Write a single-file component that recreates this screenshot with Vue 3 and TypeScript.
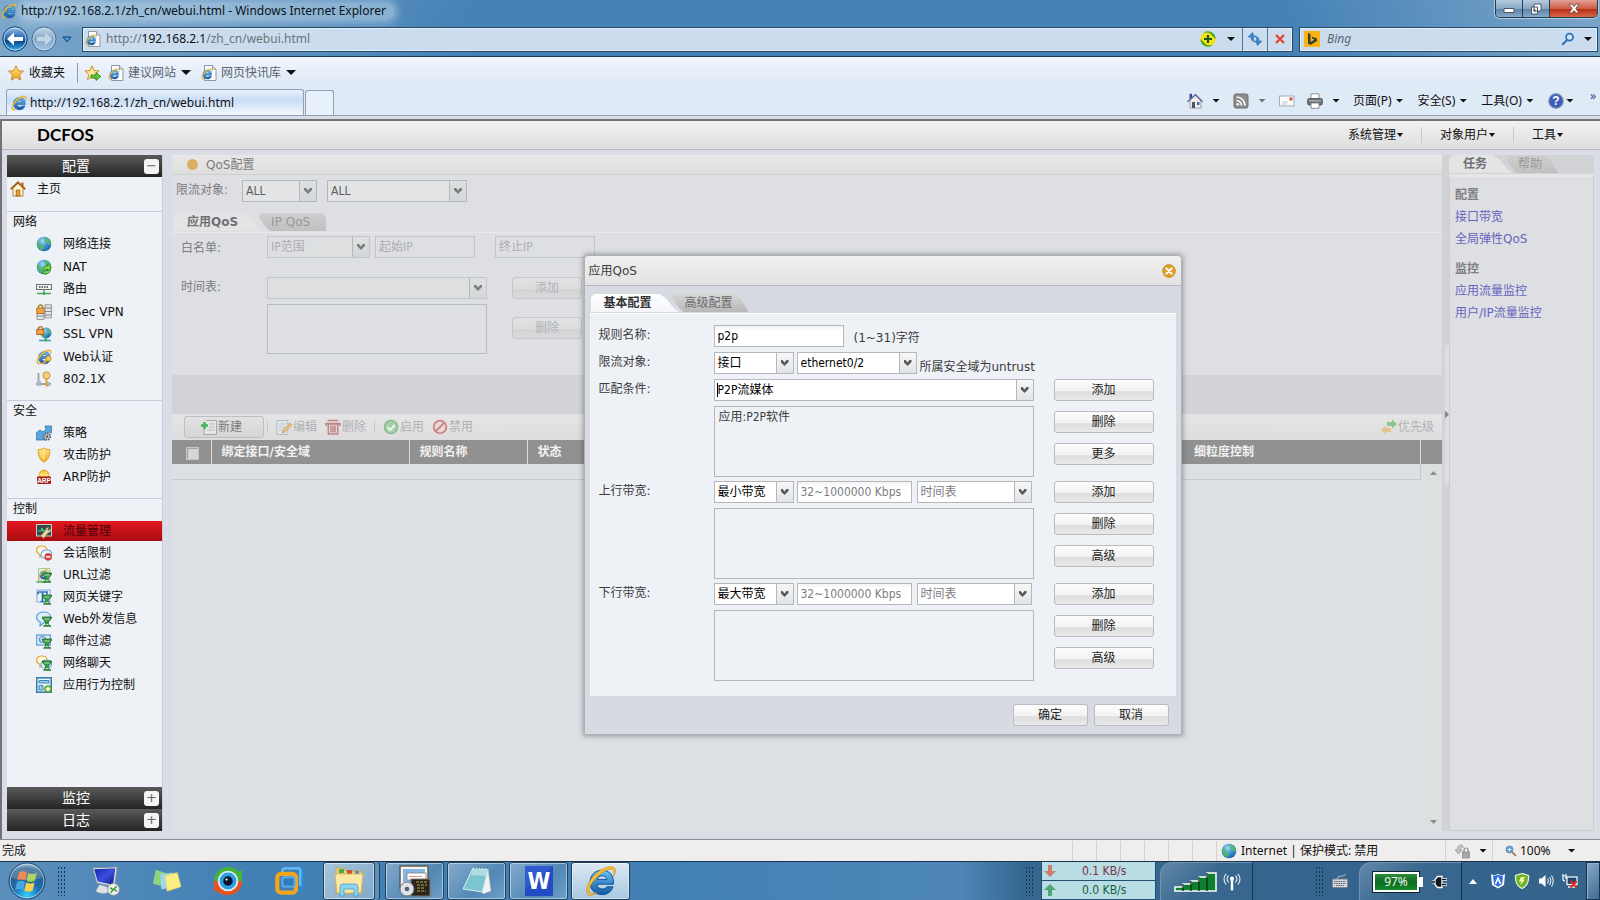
<script setup lang="ts">
import { h, ref } from 'vue'

interface IconProps { n: string; s?: number }
const Ico = (p: IconProps) =>
  h('svg', { width: p.s ?? 16, height: p.s ?? 16, 'aria-hidden': 'true' }, [h('use', { href: '#i-' + p.n })])
Ico.props = ['n', 's']

interface NavItem { icon: string; label: string; tall?: boolean }
interface NavGroup { title: string; items: NavItem[] }

const groups: NavGroup[] = [
  { title: '网络', items: [
    { icon: 'globe', label: '网络连接' },
    { icon: 'nat', label: 'NAT', tall: true },
    { icon: 'route', label: '路由' },
    { icon: 'ipsec', label: 'IPSec VPN', tall: true },
    { icon: 'ssl', label: 'SSL VPN' },
    { icon: 'webauth', label: 'Web认证', tall: true },
    { icon: 'dot1x', label: '802.1X' },
  ] },
  { title: '安全', items: [
    { icon: 'policy', label: '策略' },
    { icon: 'shield', label: '攻击防护' },
    { icon: 'arp', label: 'ARP防护' },
  ] },
  { title: '控制', items: [
    { icon: 'traffic', label: '流量管理' },
    { icon: 'session', label: '会话限制' },
    { icon: 'url', label: 'URL过滤' },
    { icon: 'keyword', label: '网页关键字' },
    { icon: 'webpost', label: 'Web外发信息' },
    { icon: 'mailf', label: '邮件过滤' },
    { icon: 'chat', label: '网络聊天' },
    { icon: 'appctl', label: '应用行为控制' },
  ] },
]
const active = ref('流量管理')
const ruleName = ref('p2p')

const bands = [
  { id: 'up', label: '上行带宽:', mode: '最小带宽' },
  { id: 'down', label: '下行带宽:', mode: '最大带宽' },
]
const menus = ['页面(P)', '安全(S)', '工具(O)']
const topMenus = ['系统管理', '对象用户', '工具']
const pinned = ['rdp', 'notes', 'eye', 'vm']
const running = ['setup', 'notepad', 'wps', 'ie']
const tray = ['traya', 'tray360', 'sound', 'netoff']
</script>

<template>
  <svg class="defs" width="0" height="0" aria-hidden="true">
    <defs>
      <linearGradient id="g-blue" x1="0" y1="0" x2="0" y2="1"><stop offset="0" stop-color="#6cc0f2" /><stop offset="1" stop-color="#0f58a4" /></linearGradient>
      <linearGradient id="g-nav" x1="0" y1="0" x2="0" y2="1"><stop offset="0" stop-color="#9cc4e8" /><stop offset=".5" stop-color="#1b5cae" /><stop offset=".55" stop-color="#0c3c86" /><stop offset="1" stop-color="#35b4f0" /></linearGradient>
      <linearGradient id="g-fwd" x1="0" y1="0" x2="0" y2="1"><stop offset="0" stop-color="#c3d8ea" /><stop offset=".5" stop-color="#86a9c8" /><stop offset="1" stop-color="#a4c6e2" /></linearGradient>
      <radialGradient id="g-orb" cx=".5" cy=".9" r=".9"><stop offset="0" stop-color="#35d0ff" /><stop offset=".4" stop-color="#1a6fb0" /><stop offset=".75" stop-color="#2a5d8c" /><stop offset="1" stop-color="#a9c8dd" /></radialGradient>
      <radialGradient id="g-globe" cx=".4" cy=".3" r=".8"><stop offset="0" stop-color="#a5dcf5" /><stop offset=".5" stop-color="#3a90d0" /><stop offset="1" stop-color="#1a5aa0" /></radialGradient>
      <linearGradient id="g-gold" x1="0" y1="0" x2="0" y2="1"><stop offset="0" stop-color="#ffe680" /><stop offset="1" stop-color="#f0a21c" /></linearGradient>
      <linearGradient id="g-scr" x1="0" y1="0" x2="1" y2="1"><stop offset="0" stop-color="#1420a8" /><stop offset=".5" stop-color="#3a50e0" /><stop offset="1" stop-color="#0a1480" /></linearGradient>
      <symbol id="i-ie" viewBox="0 0 16 16">
        <path d="M14.200 9.600H6C6.200 11.200 7.200 12 8.700 12c1.100 0 1.800-.4 2.200-1.100h3.100C13.300 13.300 11.300 14.800 8.600 14.800 5 14.800 2.500 12.300 2.500 8.700 2.500 5.100 5 2.600 8.600 2.600c3.700 0 5.900 2.600 5.600 7zM6.100 7.200h4.800C10.700 6 9.800 5.400 8.600 5.400 7.300 5.400 6.400 6 6.100 7.200z" fill="url(#g-blue)" stroke="#0f559c" stroke-width=".5" />
        <path d="M1.600 14.800C-.5 12.700 2 7 6.500 3.500 10 .8 14 0 15 1.800c.6 1.100 0 2.700-.8 3.900.4-1.600.4-2.800-.3-3.300C12.500 1.400 9 3 6 6 2.600 9.500 1 13 2.500 14c.8.500 2.200.2 3.500-.4-1.700 1.300-3.400 2.100-4.400 1.200z" fill="#f5bf3a" stroke="#c88a10" stroke-width=".3" />
      </symbol>
      <symbol id="i-pageie" viewBox="0 0 16 16"><path d="M3.500 .5h8L15 4v11.500H3.500z" fill="#fff" stroke="#8d98a5" /><path d="M11.500.5V4H15" fill="#dce3ea" stroke="#8d98a5" /><svg x="0" y="3" width="12" height="12"><use href="#i-ie" /></svg></symbol>
      <symbol id="i-star" viewBox="0 0 16 16"><path d="M8 .8l2.200 4.900 5.300.5-4 3.600 1.200 5.300L8 12.300l-4.700 2.800 1.200-5.300-4-3.600 5.300-.5z" fill="url(#g-gold)" stroke="#d0801a" stroke-width=".9" /></symbol>
      <symbol id="i-staradd" viewBox="0 0 16 16"><path d="M7 .8l2 4.700 5 .5-3.700 3.400 1.100 5L7 11.800l-4.400 2.700 1.100-5L0 6.000l5-.5z" fill="#fbe89c" stroke="#d0901a" stroke-width="1" /><path d="M6 10h5V7.500L15.800 11.500 11 15.500V13H6z" fill="#5cc832" stroke="#2c7c14" stroke-width=".8" /></symbol>
      <symbol id="i-back" viewBox="0 0 26 26"><circle cx="13" cy="13" r="12.200" fill="url(#g-nav)" stroke="#16406c" /><circle cx="13" cy="13" r="11" fill="none" stroke="#c8e4f6" stroke-width=".9" /><path d="M5 13l7-6.500V11h9v4h-9v4.500z" fill="#fff" /></symbol>
      <symbol id="i-fwd" viewBox="0 0 26 26"><circle cx="13" cy="13" r="12" fill="url(#g-fwd)" stroke="#3e6488" /><circle cx="13" cy="13" r="11" fill="none" stroke="#c4dbed" stroke-width=".8" /><path d="M21 13l-7-6.500V11H6v4h8v4.500z" fill="#c0d5e6" /></symbol>
      <symbol id="i-plus360" viewBox="0 0 16 16"><circle cx="8" cy="8" r="7.600" fill="#f7e018" /><path d="M15.600 8A7.600 7.600 0 0 0 3 2.300C6 .8 11 1.500 12.500 5zM.4 8A7.600 7.600 0 0 0 13 13.700C10 15 5 14.500 3.500 11z" fill="#3da526" /><path d="M8 4v8M4 8h8" stroke="#175c12" stroke-width="2.200" /></symbol>
      <symbol id="i-refresh" viewBox="0 0 16 16"><path d="M5.500 1.500L1 6h3c0 2.500 .5 4 3 4.500C6.300 9 6.500 8 6.500 6h2V5L7 5zM10.500 14.500L15 10h-3c0-2.500-.5-4-3-4.500.7 1.500.5 2.500.5 4.500h-2v1L9 11z" fill="#3c8ace" stroke="#1c5c9c" stroke-width=".5" /></symbol>
      <symbol id="i-stop" viewBox="0 0 16 16"><path d="M4 1l4 4.500L12 1l3 3-4.500 4L15 12l-3 3-4-4.500L4 15l-3-3 4.500-4L1 4z" fill="#d8483c" stroke="#f6e6e6" stroke-width=".9" /></symbol>
      <symbol id="i-bing" viewBox="0 0 16 16"><path d="M0 0h16v16H0z" fill="#fbb416" /><path d="M4 2l2.500 1v8l4-2.200-2-1L7.500 5.500 13 7.500v2.500L6.500 14 4 12.500z" fill="#3c3c34" /></symbol>
      <symbol id="i-search" viewBox="0 0 16 16"><circle cx="9.800" cy="5.800" r="4" fill="#cfe6f8" stroke="#2b71b4" stroke-width="2" /><path d="M7 9l-5.500 5.500" stroke="#2b71b4" stroke-width="2.400" /></symbol>
      <symbol id="i-homeblue" viewBox="0 0 16 16"><path d="M3 7v8h11V7L8.500 2z" fill="#f0ede4" stroke="#888ea0" stroke-width=".8" /><path d="M2.500 .8h2.500v5H2.500z" fill="#3548a0" /><path d="M.5 8.700L8.500 1.700l7 7" fill="none" stroke="#5a6a98" stroke-width="1.500" /><path d="M5 9h3v6H5z" fill="#4a5276" /><path d="M10 9h2.500v3H10z" fill="#3f6ab0" /></symbol>
      <symbol id="i-rss" viewBox="0 0 16 16"><rect x="1" y="1" width="14" height="14" rx="2" fill="#8c8c8c" stroke="#6c6c6c" /><circle cx="4.800" cy="11.300" r="1.300" fill="#fff" /><path d="M3.500 7.500a5 5 0 0 1 5 5M3.500 4a8.500 8.500 0 0 1 8.500 8.500" fill="none" stroke="#fff" stroke-width="1.600" /></symbol>
      <symbol id="i-mail" viewBox="0 0 16 16"><rect x=".5" y="3" width="14.500" height="10" fill="#f8f9fb" stroke="#a5adb8" /><path d="M10.500 4.500h3v3h-3z" fill="#d84c40" /><path d="M3 9h6M3 11h5" stroke="#b4bac4" stroke-width=".8" /></symbol>
      <symbol id="i-printer" viewBox="0 0 16 16"><path d="M4 .8h8V6H4z" fill="#fff" stroke="#777" stroke-width=".8" /><rect x=".6" y="5.500" width="14.800" height="6.500" rx="1.500" fill="#6c7076" stroke="#45484c" stroke-width=".7" /><path d="M2 7h12v1.500H2z" fill="#a8acb0" /><path d="M4 10h8v5.300H4z" fill="#fff" stroke="#777" stroke-width=".8" /></symbol>
      <symbol id="i-help" viewBox="0 0 16 16"><circle cx="8" cy="8" r="7.300" fill="#3b5cb8" stroke="#8e9ab8" stroke-width="1.200" /><text x="8" y="12.300" text-anchor="middle" font-size="12" font-weight="700" font-family="Liberation Sans, sans-serif" fill="#fff">?</text></symbol>
      <symbol id="i-home" viewBox="0 0 16 16"><path d="M3 7v8h10V7L8 2z" fill="#fff3d0" stroke="#b07830" stroke-width=".9" /><path d="M11.500 1.500h2v4h-2z" fill="#a8641c" /><path d="M.8 8.300L8 1.500l7.200 6.800" fill="none" stroke="#a8641c" stroke-width="2" /><path d="M6.200 9h3.600v6H6.200z" fill="#e8a030" stroke="#8a5010" stroke-width=".7" /></symbol>
      <symbol id="i-globe" viewBox="0 0 16 16"><circle cx="8" cy="8" r="7.300" fill="url(#g-globe)" /><path d="M10 1.500c3 1 5 3.500 5 6.500-1 2-2 1-3-.5s-3-.5-3.500-2.500S9 2 10 1.500zM2 5c2 0 3 1 3 2.500S8 9 8 11s-1.500 3-2.500 3.500C3 13 1 10 1.500 6.500z" fill="#58c060" opacity=".75" /></symbol>
      <symbol id="i-nat" viewBox="0 0 16 16"><use href="#i-globe" /><path d="M7 11c0-3 2-4 4.500-4V5l4 3.500-4 3.500v-2C9.500 10 9 11 8.500 12zM14.500 11c-.5 3-2.500 3.500-4.500 3.500V16l-3.500-3" fill="#7ddc35" stroke="#2c7c14" stroke-width=".7" /></symbol>
      <symbol id="i-route" viewBox="0 0 16 16"><rect x=".5" y="3.500" width="15" height="5" fill="#eef2f0" stroke="#6c7472" /><path d="M3 6h10" stroke="#444" stroke-width="1.600" stroke-dasharray="1.500 1" /><path d="M8 9v3M1 12.500h14" stroke="#56a06a" stroke-width="1.300" /><circle cx="8" cy="12.500" r="1.500" fill="#37b050" /></symbol>
      <symbol id="i-ipsec" viewBox="0 0 16 16"><path d="M9 .8h6.500v13H9zM1 9h7v6.500H1z" fill="#e2e5e8" stroke="#84898e" stroke-width=".8" /><path d="M9 4h6.500M9 7.500h6.500M9 11h6.500M1 12h7" stroke="#84898e" /><path d="M2.500 4.500V3a2 2 0 0 1 4 0v1.500" fill="none" stroke="#a87818" stroke-width="1.300" /><rect x=".8" y="4" width="7.400" height="5.500" fill="#f2a63c" stroke="#a8641c" stroke-width=".8" /></symbol>
      <symbol id="i-ssl" viewBox="0 0 16 16"><svg x="4" y="1" width="12" height="12"><use href="#i-globe" /></svg><path d="M2.500 3.500V2.600a2 2 0 0 1 4 0v1" fill="none" stroke="#a87818" stroke-width="1.300" /><rect x=".8" y="3.300" width="7" height="5.200" fill="#f2a63c" stroke="#a8441c" stroke-width=".8" /><path d="M10 12v2M3 14.500h12" stroke="#3a9cc0" stroke-width="1.300" /><circle cx="9.500" cy="14" r="1.500" fill="#37b050" /></symbol>
      <symbol id="i-webauth" viewBox="0 0 16 16"><use href="#i-ie" /><circle cx="12.500" cy="9.500" r="2.600" fill="#f6cf58" stroke="#b8841c" stroke-width=".8" /><path d="M11 11l-4.500 4" stroke="#e0a830" stroke-width="2" /></symbol>
      <symbol id="i-dot1x" viewBox="0 0 16 16"><path d="M2.500 2v11M0 13h15" stroke="#9ba0a5" stroke-width="1.800" /><path d="M1 10h4v5H1zM10 11h4v4h-4z" fill="#b4b8bc" /><circle cx="10.500" cy="4.500" r="3.600" fill="#f2d07c" stroke="#c89438" /><path d="M10.500 7.500v7h2" fill="none" stroke="#d8a248" stroke-width="2" /></symbol>
      <symbol id="i-policy" viewBox="0 0 16 16"><path d="M0 15V8l4-3 3 2 3-3-1-3h6.500v7l-2-1-3 3v5z" fill="#58a6dc" stroke="#2b6ca4" stroke-width=".7" /><circle cx="11" cy="11.500" r="3.300" fill="#c8ccd0" stroke="#5c6268" stroke-width="1.800" stroke-dasharray="1.600 .9" /><circle cx="11" cy="11.500" r="1.200" fill="#50565c" /></symbol>
      <symbol id="i-shield" viewBox="0 0 16 16"><path d="M8 1c2 1.300 4 1.600 5.800 1.500C14 8 13 12.500 8 15.200 3 12.500 2 8 2.200 2.500 4 2.600 6 2.300 8 1z" fill="url(#g-gold)" stroke="#e5a524" /><path d="M8 3.500v9M5 4.500c0 3 1 6 3 8" stroke="#fff3ae" fill="none" /></symbol>
      <symbol id="i-arp" viewBox="0 0 16 16"><path d="M8 .8C11 2 13 3 13 7v4H3V7c0-4 2-5 5-6.200z" fill="#fbc838" stroke="#d89c1c" /><path d="M6 3v4M10 3v4M3 6h10" stroke="#fff1a0" /><rect x="1" y="7.500" width="14" height="7.500" rx="1" fill="#a02018" /><text x="8" y="13.800" text-anchor="middle" font-size="6.500" font-weight="700" font-family="Liberation Sans, sans-serif" fill="#fff">ARP</text></symbol>
      <symbol id="i-traffic" viewBox="0 0 16 16"><rect x=".5" y="1.500" width="15" height="11.500" fill="#364a48" stroke="#c8ced0" /><path d="M2 8h3l1-3 1.500 4 1-2h2" fill="none" stroke="#4ce0a0" /><path d="M14.500 5.500l-2 2-1-1 1.500-2c-2-.5-3.500 1-3 2.800L5 12.500 7.500 15.500l4.500-5.800c2 .3 3.300-2 2.500-4.200z" fill="#f0d8a0" stroke="#94825c" stroke-width=".6" /></symbol>
      <symbol id="i-bub" viewBox="0 0 16 16"><path d="M5.500 1C8.500 1 11 2.600 11 5.300S8.500 9.500 6 9.500L4 12l-.5-3C1.500 8.500.6 7 .6 5 .6 2.600 2.600 1 5.500 1z" fill="#fff8dc" stroke="#e8a53c" stroke-width="1.200" /><path d="M10.500 5c3 0 5 1.600 5 4 0 2-1 3.300-3 4l-.5 2.300-2.500-2C7 13.300 5 12 5 9.500 5 7 7.500 5 10.500 5z" fill="#eef7ff" stroke="#6aa6dc" stroke-width="1.200" /></symbol>
      <symbol id="i-session" viewBox="0 0 16 16"><use href="#i-bub" /><circle cx="12.200" cy="11.800" r="3.500" fill="#e2483c" stroke="#b42820" stroke-width=".5" /><path d="M10 11.800h4.400" stroke="#fff" stroke-width="1.500" /></symbol>
      <symbol id="i-filt" viewBox="0 0 16 16"><path d="M6.500 6h9v1.500l-3.200 3.500v2.500l2.700 1.700H7.500l2-1.700V11L6.500 7.500z" fill="#3c9c48" stroke="#1c6428" stroke-width=".8" /><path d="M8.500 8h5M9.500 13.500h3" stroke="#c8f0c8" stroke-width=".8" /></symbol>
      <symbol id="i-url" viewBox="0 0 16 16"><path d="M2.500 1.500H14V14H2.500z" fill="#eaf5e0" stroke="#a8c89c" /><svg x="2" y="2" width="11" height="11"><use href="#i-ie" /></svg><path d="M.5 15h9" stroke="#3c9c48" stroke-width="1.300" /><use href="#i-filt" /></symbol>
      <symbol id="i-keyword" viewBox="0 0 16 16"><rect x="1" y="1" width="13" height="12" fill="#eef6fd" stroke="#7ca9d4" /><path d="M2 3h9v2.500M2 5.500V3M6.500 3v9.500M4.500 12.500h4" fill="none" stroke="#2f74b8" stroke-width="1.700" /><use href="#i-filt" /></symbol>
      <symbol id="i-webpost" viewBox="0 0 16 16"><path d="M7.500 1c4 0 7 2 7 5s-3 5.500-6.500 5.500L4 15l.3-4C2 10.200.6 8.500.6 6 .6 3 3.500 1 7.500 1z" fill="#dceefb" stroke="#5a9cd4" stroke-width="1.200" /><use href="#i-filt" /></symbol>
      <symbol id="i-mailf" viewBox="0 0 16 16"><rect x=".7" y="2" width="13.600" height="10" fill="#dceefb" stroke="#5a9cd4" stroke-width="1.200" /><circle cx="6.500" cy="6.500" r="3" fill="none" stroke="#4d8cc8" stroke-width="1.200" /><circle cx="6.500" cy="6.500" r="1" fill="#4d8cc8" /><use href="#i-filt" /></symbol>
      <symbol id="i-chat" viewBox="0 0 16 16"><use href="#i-bub" /><use href="#i-filt" /></symbol>
      <symbol id="i-appctl" viewBox="0 0 16 16"><rect x=".8" y=".8" width="14.400" height="14.400" fill="#eaf4fb" stroke="#2b78ac" stroke-width="1.500" /><path d="M3 3.500h10v2.500H3zM3 8.500h4V13H3z" fill="#9bcaea" stroke="#3d86b8" /><circle cx="12" cy="12" r="3.600" fill="#7cc43c" stroke="#3c8018" stroke-width=".6" /><path d="M12 10v4M10 12h4" stroke="#fff" stroke-width="1.300" /></symbol>
      <symbol id="i-new" viewBox="0 0 16 16"><path d="M5 1.500h10.500v14H3V9" fill="#e6e8e6" stroke="#a2a8a4" /><path d="M8 5h6M8 8h6M6 11h8" stroke="#b4bab6" /><path d="M3.500 3v7M0 6.500h7" stroke="#4cb45c" stroke-width="2.600" /></symbol>
      <symbol id="i-edit" viewBox="0 0 16 16"><path d="M.8 1.500h11v14H.8z" fill="#e2e5e8" stroke="#b4bcc2" /><path d="M3 5h7M3 8h6M3 11h4" stroke="#b8c8d4" /><path d="M14 4l2 2-7 7-3 1 1-3z" fill="#e8c080" stroke="#c89c60" stroke-width=".7" /></symbol>
      <symbol id="i-trash" viewBox="0 0 16 16"><path d="M2 5h12M2.500 1.500h11M3.300 5v10h9.400V5M6 6.500v7M8 6.500v7M10 6.500v7M1 7V4.500h14V7" fill="none" stroke="#bf8484" stroke-width="1.500" /></symbol>
      <symbol id="i-ok" viewBox="0 0 16 16"><circle cx="8" cy="8" r="6.600" fill="#a6ceaa" stroke="#8ab890" stroke-width="1.400" /><path d="M4.500 8l2.700 3 4.500-5" fill="none" stroke="#eef4ee" stroke-width="2" /></symbol>
      <symbol id="i-ban" viewBox="0 0 16 16"><circle cx="8" cy="8" r="6.300" fill="#e2dcdc" stroke="#d48080" stroke-width="1.800" /><path d="M3.500 12.500l9-9" stroke="#d48080" stroke-width="1.800" /></symbol>
      <symbol id="i-prio" viewBox="0 0 16 16"><path d="M6 3h5V.500l5 4.500-5 4.500V7H6z" fill="#8cc88c" /><path d="M10 9H5V6.500L0 11l5 4.500V13h5z" fill="#e4c488" /></symbol>
      <symbol id="i-close" viewBox="0 0 16 16"><circle cx="8" cy="8" r="7.300" fill="#e0a02c" stroke="#c07c14" stroke-width=".8" /><path d="M5 5l6 6M11 5l-6 6" stroke="#fff" stroke-width="2.400" stroke-linecap="round" /></symbol>
      <symbol id="i-lock" viewBox="0 0 16 16"><path d="M7 1.500A6 6 0 0 0 2 7H0l3.500 4L7 7H5c.5-2 2-3 4-3" fill="#c4c4c4" stroke="#888" stroke-width=".6" /><path d="M9 9V7a2 2 0 0 1 4 0v2" fill="none" stroke="#888" stroke-width="1.200" /><rect x="7.500" y="9" width="7" height="6" fill="#a8a8a8" stroke="#777" stroke-width=".6" /></symbol>
      <symbol id="i-zoom" viewBox="0 0 16 16"><circle cx="6" cy="6" r="4.800" fill="#4c98e0" stroke="#8a98a8" stroke-width="1.200" /><path d="M6 3.500v5M3.500 6h5" stroke="#fff" stroke-width="1.400" /><path d="M9.500 9.500l5 5" stroke="#9a7a58" stroke-width="2.400" /></symbol>
      <symbol id="i-orb" viewBox="0 0 38 38"><circle cx="19" cy="19" r="18" fill="url(#g-orb)" stroke="#20486c" /><circle cx="19" cy="19" r="16.800" fill="none" stroke="#cfe4f2" stroke-opacity=".7" /><path d="M11 10.500c3-1.600 5-1.400 8 0l-1.700 8c-3-1.400-5-1.400-8 0z" fill="#ee6a2c" /><path d="M20.300 11c3 1.500 5.500 1.500 8.500-.2l-1.900 8c-3 1.600-5.500 1.600-8.300 0z" fill="#9ccc3c" /><path d="M9 20c3-1.600 5-1.400 8 0l-1.800 8c-3-1.400-5-1.400-8 0z" fill="#4aa4e4" /><path d="M18.300 20.500c3 1.500 5.500 1.500 8.300 0l-1.900 7.900c-3 1.600-5.500 1.600-8.300 0z" fill="#fbd04a" /><path d="M3 15C6 5 32 5 35 15 28 19 10 19 3 15z" fill="#fff" opacity=".2" /></symbol>
      <symbol id="i-rdp" viewBox="0 0 32 32"><path d="M9 20l8 2 2 6q-8 3-14-1z" fill="#dfe3e7" stroke="#a0a8b0" stroke-width=".6" /><path d="M2 2l26-1-3 21L6 18z" fill="#e4e8ec" stroke="#7c8894" stroke-width=".8" /><path d="M3.500 3.500L26 2.500 23.500 20 7 16.500z" fill="url(#g-scr)" /><circle cx="24" cy="25" r="6.300" fill="#eef0ee" stroke="#989c98" /><path d="M20.500 23l3 2.500-2.500 3M27.500 21.500l-3 3 3 2.500" fill="none" stroke="#3c9c3c" stroke-width="1.600" /></symbol>
      <symbol id="i-notes" viewBox="0 0 32 32"><path d="M4 4l12 4-3 14-12-3z" fill="#8fd47c" /><path d="M9 9l13-2 1 15-13 3z" fill="#9ed8f0" /><path d="M14 10l13-3 4 15-15 5z" fill="#fbee84" stroke="#e0cc58" stroke-width=".6" /></symbol>
      <symbol id="i-eye" viewBox="0 0 32 32"><path d="M16 1a15 15 0 0 1 12 5l3-2v12H1A15 15 0 0 1 16 1z" fill="#46b43c" /><path d="M16 31a15 15 0 0 1-12-5l-3 2V16h30a15 15 0 0 1-15 15z" fill="#e8501c" /><circle cx="16" cy="16" r="11" fill="#d4ecf8" /><circle cx="16" cy="16" r="9" fill="#2c9cdc" /><circle cx="16" cy="16" r="5" fill="#08142c" /><circle cx="14.500" cy="14.500" r="1.200" fill="#fff" /></symbol>
      <symbol id="i-vm" viewBox="0 0 32 32"><path d="M11 2.500h15q4 0 4 4v16l-5 6" fill="none" stroke="#2f8ad4" stroke-width="4" stroke-linejoin="round" /><path d="M9 8V5q0-2.500 2.500-2.500H26q2 0 2 2V21" fill="none" stroke="#6cbcf0" stroke-width="2.500" /><rect x="3.500" y="8.500" width="20" height="20" rx="4" fill="none" stroke="#f2a41c" stroke-width="4.500" /><rect x="9" y="12" width="13" height="10" rx="2" fill="#2f7cc0" stroke="#5cb0ec" stroke-width="2" /></symbol>
      <symbol id="i-explorer" viewBox="0 0 32 32"><path d="M3 3h8l2 3h16v22H3z" fill="#f0cc6c" stroke="#c8a040" stroke-width=".8" /><path d="M6 4h5v4H6z" fill="#3cb04c" /><path d="M14 5h5v4h-5z" fill="#d05038" /><path d="M22 6h4v3h-4z" fill="#4c8cd0" /><path d="M2 9h28l-2 19H4z" fill="#fbe8a4" stroke="#d8b454" stroke-width=".8" /><path d="M7 31V22q0-3 3-3h12q3 0 3 3v9h-4v-7H11v7z" fill="#8cd4f4" stroke="#4a9cc8" stroke-width=".8" /></symbol>
      <symbol id="i-setup" viewBox="0 0 32 32"><rect x="1" y="1" width="28" height="22" fill="#f4f4f0" stroke="#605c50" stroke-width="1.500" /><path d="M4 4h22v13H4z" fill="#86b6e4" /><path d="M8 8h19v7H8z" fill="#fff" stroke="#777" stroke-width=".7" /><path d="M10 11.500h13" stroke="#d89080" /><rect x="12" y="14" width="19" height="17" fill="#282420" stroke="#807860" /><path d="M17 17h12M18 20h10M18 23h7M18 26h9" stroke="#c8a838" stroke-width="1.200" stroke-dasharray="3 1" /><circle cx="8" cy="24" r="7" fill="#dfe3e8" stroke="#707478" /><circle cx="8" cy="24" r="2.300" fill="#586068" /></symbol>
      <symbol id="i-notepad" viewBox="0 0 32 32"><path d="M12 3l15 1-6 23-19-3z" fill="#7cc4d0" stroke="#e4f4f6" stroke-width=".9" /><path d="M27 4l3 22-8 3-1-2z" fill="#eef4f4" stroke="#a8bcc0" stroke-width=".6" /><path d="M12 3l15 1-2 7-15-1z" fill="#c4e8ec" opacity=".7" /><path d="M14 2v2M17 2v2M20 2v2M23 2v2M26 2v2" stroke="#5c6c70" /></symbol>
      <symbol id="i-wps" viewBox="0 0 32 32"><path d="M2 1h28v30H2z" fill="#234cc4" /><path d="M2 1h28L2 24z" fill="#4470e0" opacity=".4" /><text x="16" y="24" text-anchor="middle" font-size="23" font-weight="700" font-family="DejaVu Sans Condensed, sans-serif" fill="#fff">W</text></symbol>
      <symbol id="i-ant" viewBox="0 0 16 16"><path d="M8 6v9.500" stroke="#fff" stroke-width="2.200" /><circle cx="8" cy="5" r="1.800" fill="#fff" /><path d="M5 2.500a4 4 0 0 0 0 6M11 2.500a4 4 0 0 1 0 6M2.800 .8a7 7 0 0 0 0 9.500M13.200 .8a7 7 0 0 1 0 9.500" fill="none" stroke="#dce8f0" stroke-width="1.100" /></symbol>
      <symbol id="i-kbd" viewBox="0 0 16 16"><rect x=".5" y="6" width="15" height="8.500" rx="1" fill="#d4d8dc" stroke="#7c848c" /><path d="M2 8.500h12M2 10.500h12M4 12.500h8" stroke="#5c646c" stroke-dasharray="1.500 .8" /><path d="M5 6q0-3 4-3 4 .5 5-2" fill="none" stroke="#b4bcc4" /></symbol>
      <symbol id="i-plug" viewBox="0 0 16 16"><path d="M5.500 2.500H10v11H5.500L3 10.500v-5z" fill="#10181f" stroke="#fff" stroke-width="1.300" /><path d="M10 5.500h5M10 10.500h5M0 8h3" stroke="#fff" stroke-width="3" /><path d="M10 5.500h4.500M10 10.500h4.500M0 8h3" stroke="#10181f" stroke-width="1.500" /></symbol>
      <symbol id="i-traya" viewBox="0 0 16 16"><path d="M1 1l2.500 1.500L8 1l4.500 1.500L15 1l-1 11-6 3.500L2 12z" fill="#fff" /><path d="M8 1.800l5 1.500-1 8-4 2.500-4-2.500-1-8z" fill="#2a70e0" /><path d="M5.500 11L8 5l2.500 6" fill="none" stroke="#fff" stroke-width="1.600" /></symbol>
      <symbol id="i-tray360" viewBox="0 0 16 16"><path d="M8 .5l6.500 2C15 9 12.500 13.500 8 15.500 3.500 13.500 1 9 1.500 2.500z" fill="#6cb42c" stroke="#eaf4d4" stroke-width="1.200" /><path d="M11.500 4H7L5 8.500h2.500L6 12.500l5-6H8.500z" fill="#fff9b0" /></symbol>
      <symbol id="i-sound" viewBox="0 0 16 16"><path d="M1 5.500h2.500L7.500 2v12L3.500 10.500H1z" fill="#fff" /><path d="M9.500 5.500q1.500 2.500 0 5M11.500 4q2.500 4 0 8M13.500 2.500q3.500 5.500 0 11" fill="none" stroke="#dfe9f1" stroke-width="1.100" /></symbol>
      <symbol id="i-netoff" viewBox="0 0 16 16"><path d="M1 1v5q0 2 2 2M4 1v5M1 3h3" fill="none" stroke="#fff" stroke-width="1.200" /><rect x="5" y="4" width="10" height="7.500" fill="#20486c" stroke="#fff" stroke-width="1.200" /><path d="M6 14h8" stroke="#fff" stroke-width="1.400" /><path d="M8.500 8l6 6.500M14.500 8l-6 6.500" stroke="#e02c20" stroke-width="2" /></symbol>
    </defs>
  </svg>

  <div class="screen">
    <header class="frame">
      <div class="titlebar">
        <Ico n="ie" />
        <span class="glow">http://192.168.2.1/zh_cn/webui.html - Windows Internet Explorer</span>
        <div class="winbtns">
          <button type="button" aria-label="最小化"><svg width="12" height="10"><path d="M1 4.500h10v4H1z" fill="#fff" stroke="#4a5868" /></svg></button>
          <button type="button" aria-label="还原"><svg width="12" height="12"><path d="M4 1h7v7H4zM1.500 4h6v7h-6z" fill="#fff" stroke="#4a5868" /><path d="M3.500 6.500h2v2h-2z" fill="#4a5868" /></svg></button>
          <button type="button" class="x" aria-label="关闭"><svg width="12" height="11"><path d="M1 1h3l2 2.500L8 1h3L7.800 5.500 11 10H8L6 7.500 4 10H1l3.200-4.500z" fill="#fff" stroke="#6c3834" stroke-width=".8" /></svg></button>
        </div>
      </div>
      <div class="addrrow">
        <button type="button" class="bare" aria-label="后退"><Ico n="back" :s="26" /></button>
        <button type="button" class="bare" aria-label="前进"><Ico n="fwd" :s="26" /></button>
        <svg class="hist" width="10" height="7"><path d="M1 1h8L5 6z" fill="#4fa0dc" stroke="#123c64" /></svg>
        <div class="addr">
          <Ico n="pageie" />
          <span class="url">http://<b>192.168.2.1</b>/zh_cn/webui.html</span>
          <Ico n="plus360" /><i class="tri wide"></i>
          <button type="button" class="seg" aria-label="刷新"><Ico n="refresh" /></button>
          <button type="button" class="seg" aria-label="停止"><Ico n="stop" :s="12" /></button>
        </div>
        <div class="find">
          <Ico n="bing" />
          <input type="text" placeholder="Bing" aria-label="搜索" />
          <Ico n="search" :s="14" /><i class="tri"></i>
        </div>
      </div>
    </header>

    <div class="favbar">
      <Ico n="star" /><span class="fav">收藏夹</span><span class="vsep"></span>
      <Ico n="staradd" />
      <a href="#" class="favlink"><Ico n="pageie" />建议网站<i class="tri"></i></a>
      <a href="#" class="favlink"><Ico n="pageie" />网页快讯库<i class="tri"></i></a>
    </div>

    <div class="tabrow">
      <div class="ietab"><Ico n="ie" />http://192.168.2.1/zh_cn/webui.html</div>
      <div class="newtab"></div>
      <div class="cmds">
        <Ico n="homeblue" /><i class="tri m1"></i>
        <Ico n="rss" /><i class="tri m1 dim"></i>
        <Ico n="mail" /><span class="gap"></span><Ico n="printer" /><i class="tri m1"></i>
        <button v-for="m in menus" :key="m" type="button" class="cmd">{{ m }}<i class="tri"></i></button>
        <Ico n="help" /><i class="tri m0"></i><span class="more">»</span>
      </div>
    </div>

    <div class="page">
      <div class="banner">
        <h1>DCFOS</h1>
        <nav><button v-for="m in topMenus" :key="m" type="button">{{ m }}<i class="tri sm"></i></button></nav>
      </div>

      <div class="cols">
        <aside class="side">
          <div class="acc">配置<button type="button" aria-label="折叠">−</button></div>
          <a href="#" class="home"><Ico n="home" />主页</a>
          <section v-for="g in groups" :key="g.title" class="grp">
            <h2>{{ g.title }}</h2>
            <a v-for="it in g.items" :key="it.label" href="#" class="item" :class="{ tall: it.tall, on: it.label === active }" @click.prevent="active = it.label"><Ico :n="it.icon" />{{ it.label }}</a>
          </section>
          <div class="acc push">监控<button type="button" aria-label="展开监控">+</button></div>
          <div class="acc">日志<button type="button" aria-label="展开日志">+</button></div>
        </aside>

        <div class="work">
          <main class="main">
            <div class="ptitle"><i class="dot"></i>QoS配置</div>
            <div class="filter">
              <label for="f-obj">限流对象:</label>
              <span class="sel w75"><select id="f-obj"><option>ALL</option></select><i class="arr"></i></span>
              <span class="sel w140"><select aria-label="对象"><option>ALL</option></select><i class="arr"></i></span>
            </div>
            <div class="tabs mt"><button type="button" class="tab cur">应用QoS</button><button type="button" class="tab">IP QoS</button></div>
            <div class="wl">
              <div class="wlrow">
                <label for="wl-type">白名单:</label>
                <span class="sel w103"><select id="wl-type"><option>IP范围</option></select><i class="arr"></i></span>
                <input class="ipt" type="text" placeholder="起始IP" aria-label="起始IP" />
                <input class="ipt end" type="text" placeholder="终止IP" aria-label="终止IP" />
              </div>
              <div class="wlrow two">
                <label for="wl-time">时间表:</label>
                <div class="stack">
                  <span class="sel"><select id="wl-time"></select><i class="arr"></i></span>
                  <div class="list"></div>
                </div>
                <div class="stack b"><button type="button" class="btn">添加</button><button type="button" class="btn">删除</button></div>
              </div>
            </div>
            <div class="tools">
              <button type="button" class="new"><Ico n="new" />新建</button><i class="ts"></i>
              <button type="button"><Ico n="edit" />编辑</button>
              <button type="button"><Ico n="trash" />删除</button><i class="ts"></i>
              <button type="button"><Ico n="ok" />启用</button>
              <button type="button"><Ico n="ban" />禁用</button>
              <button type="button" class="right"><Ico n="prio" />优先级</button>
            </div>
            <div class="grid">
              <table>
                <colgroup><col class="c1" /><col class="c2" /><col class="c3" /><col /><col class="c5" /><col class="c6" /></colgroup>
                <thead><tr><th><input type="checkbox" aria-label="全选" /></th><th>绑定接口/安全域</th><th>规则名称</th><th>状态</th><th>细粒度控制</th><th></th></tr></thead>
                <tbody><tr><td colspan="5"></td><td class="void"></td></tr></tbody>
              </table>
              <div class="scroll"><i class="up"></i><i class="down"></i></div>
            </div>
          </main>
          <div class="split"><i></i></div>
          <aside class="tasks">
            <div class="tabs"><button type="button" class="tab cur">任务</button><button type="button" class="tab">帮助</button></div>
            <div class="tbody">
              <h3>配置</h3>
              <a href="#">接口带宽</a><a href="#">全局弹性QoS</a>
              <h3>监控</h3>
              <a href="#">应用流量监控</a><a href="#">用户/IP流量监控</a>
            </div>
          </aside>

          <div class="mask">
            <form class="dlg" role="dialog" aria-labelledby="dlg-t" @submit.prevent>
              <div class="dhead"><span id="dlg-t">应用QoS</span><button type="button" class="bare" aria-label="关闭"><Ico n="close" :s="14" /></button></div>
              <div class="tabs"><button type="button" class="tab cur">基本配置</button><button type="button" class="tab">高级配置</button></div>
              <div class="dbody">
                <div class="row">
                  <label for="d-name">规则名称:</label>
                  <input id="d-name" v-model="ruleName" class="ipt w130" type="text" /><span class="hint">(1~31)字符</span>
                </div>
                <div class="row">
                  <label for="d-obj">限流对象:</label>
                  <span class="sel w80"><select id="d-obj"><option>接口</option></select><i class="arr"></i></span>
                  <span class="sel w120"><select aria-label="接口名称"><option>ethernet0/2</option></select><i class="arr"></i></span>
                  <span class="zone">所属安全域为untrust</span>
                </div>
                <div class="block">
                  <label for="d-cond">匹配条件:</label>
                  <div class="field">
                    <span class="sel focus"><i class="caret"></i><select id="d-cond"><option>P2P流媒体</option></select><i class="arr"></i></span>
                    <div class="list">应用:P2P软件</div>
                  </div>
                  <div class="btns"><button type="button" class="btn">添加</button><button type="button" class="btn">删除</button><button type="button" class="btn">更多</button></div>
                </div>
                <div v-for="b in bands" :key="b.id" class="block">
                  <label :for="'d-' + b.id">{{ b.label }}</label>
                  <div class="field">
                    <div class="trio">
                      <span class="sel w80"><select :id="'d-' + b.id"><option>{{ b.mode }}</option></select><i class="arr"></i></span>
                      <input class="ipt w115" type="text" placeholder="32~1000000 Kbps" aria-label="带宽" />
                      <span class="sel w115 ph"><select aria-label="时间表"><option>时间表</option></select><i class="arr"></i></span>
                    </div>
                    <div class="list"></div>
                  </div>
                  <div class="btns"><button type="button" class="btn">添加</button><button type="button" class="btn">删除</button><button type="button" class="btn">高级</button></div>
                </div>
              </div>
              <div class="dfoot"><button type="submit" class="btn">确定</button><button type="button" class="btn">取消</button></div>
            </form>
          </div>
        </div>
      </div>
    </div>

    <div class="status">
      <span class="done">完成</span>
      <i v-for="k in 6" :key="k" class="cell"></i>
      <span class="zonebox"><Ico n="globe" />Internet | 保护模式: 禁用</span>
      <span class="sbox"><Ico n="lock" /><i class="tri"></i></span>
      <span class="zbox"><Ico n="zoom" :s="12" />100%<i class="tri"></i></span>
    </div>

    <footer class="task">
      <button type="button" class="bare start" aria-label="开始"><Ico n="orb" :s="38" /></button>
      <i class="grip"></i>
      <button v-for="p in pinned" :key="p" type="button" class="pin" :aria-label="p"><Ico :n="p" :s="30" /></button>
      <button type="button" class="app first" aria-label="explorer"><Ico n="explorer" :s="32" /></button>
      <button v-for="r in running" :key="r" type="button" class="app" :class="{ lit: r === 'ie' }" :aria-label="r"><Ico :n="r" :s="32" /></button>
      <span class="fill"></span>
      <i class="grip g2"></i>
      <div class="net">
        <div class="dn"><svg width="12" height="14"><path d="M4 1h4v6h4l-6 6-6-6h4z" fill="#c88070" /></svg><span>0.1 KB/s</span></div>
        <div class="upl"><svg width="12" height="14"><path d="M4 13h4V7h4L6 1 0 7h4z" fill="#4ca870" /></svg><span>0.0 KB/s</span></div>
      </div>
      <div class="sig">
        <svg width="44" height="20"><path d="M1 19v-4h8v-3h8V9h8V5h8V1h9v18z" fill="#0c8030" stroke="#fff" stroke-width="1.500" /><path d="M9 12v7M17 9v10M25 5v14M33 1v18" stroke="#042c10" stroke-width="1.300" /></svg>
        <Ico n="ant" :s="18" />
      </div>
      <i class="grip g3"></i>
      <Ico n="kbd" />
      <div class="power"><span class="bat">97%</span><i class="nub"></i><Ico n="plug" /></div>
      <div class="tray"><svg width="8" height="5"><path d="M0 5l4-5 4 5z" fill="#fff" /></svg><Ico v-for="t in tray" :key="t" :n="t" /></div>
      <button type="button" class="desk" aria-label="显示桌面"></button>
    </footer>
  </div>
</template>

<style>
html, body { margin: 0; background: #d9dde6; }
</style>

<style scoped>
.defs { position: absolute; }
.screen { --ui: "Noto Sans", "Noto Sans CJK SC", sans-serif; --web: "DejaVu Sans", "Noto Sans CJK SC", sans-serif; --tah: "DejaVu Sans Condensed", "Noto Sans CJK SC", sans-serif; display: flex; flex-direction: column; height: 100vh; min-height: 900px; box-sizing: border-box; overflow: hidden; font: 12px/16px var(--ui); color: #111; }
.screen *, .screen *::before { box-sizing: border-box; }
button, input, select { font: inherit; color: inherit; margin: 0; padding: 0; border: 0; background: none; border-radius: 0; }
svg { flex: none; display: block; }
a { text-decoration: none; color: inherit; }
.bare { display: block; line-height: 0; }
.tri { flex: none; width: 8px; height: 4px; background: #111; clip-path: polygon(0 0, 100% 0, 50% 100%); }
.tri.dim { background: #777; }

/* browser frame */
.frame { flex: none; height: 57px; border-bottom: 1px solid #1e3c5a; background: linear-gradient(90deg, rgba(255,255,255,.3), transparent 30%, transparent 80%, rgba(255,255,255,.28)), linear-gradient(#4682b6, #4380b4); }
.titlebar { display: flex; height: 23px; gap: 4px; padding: 3px 2px 0 1px; }
.glow { height: 17px; line-height: 15px; padding-right: 8px; background: rgba(220,234,246,.4); box-shadow: 0 0 8px 4px rgba(220,234,246,.4); border-radius: 8px; color: #0a1420; }
.winbtns { margin: -3px 0 0 auto; display: flex; height: 18px; border: 1px solid #1f3c58; border-top: 0; border-radius: 0 0 5px 5px; overflow: hidden; box-shadow: 0 0 1px 1px rgba(255,255,255,.5); }
.winbtns button { width: 27px; display: flex; align-items: center; justify-content: center; border-right: 1px solid #1f3c58; background: linear-gradient(#b4cadd, #8aa9c4 50%, #5a83a8 52%, #88aac8); }
.winbtns .x { width: 47px; border: 0; background: linear-gradient(#e0a294, #cf5f48 50%, #b42c14 52%, #d86848); }
.addrrow { display: flex; align-items: center; padding: 2px 2px 0 2px; height: 30px; }
.addrrow .bare + .bare { margin-left: 3px; }
.hist { margin: 0 10px 0 5px; }
.addr, .find { display: flex; align-items: center; height: 25px; border: 1px solid #254a6c; background: #cadced; box-shadow: inset 0 0 0 1px #e4eef7; }
.addr { flex: 1; padding-left: 2px; gap: 5px; }
.url { flex: 1; color: #6a7580; }
.url b { font-weight: 400; color: #0c1118; }
.wide { margin: 0 2px 0 6px; }
.seg { align-self: stretch; width: 25px; display: flex; align-items: center; justify-content: center; border-left: 1px solid #53779a; }
.seg + .seg { margin-left: -5px; }
.find { width: 299px; margin-left: 6px; padding: 0 5px 0 4px; gap: 7px; }
.find .tri { margin-left: 2px; }
.find input { flex: 1; min-width: 0; outline: 0; }
.find input::placeholder { color: #5a646e; font-style: italic; opacity: 1; }
.favbar { flex: none; display: flex; align-items: center; height: 31px; padding-left: 8px; background: linear-gradient(#f3f7fd, #e5eef9 50%, #dfeaf7); }
.fav { margin-left: 5px; }
.vsep { width: 1px; height: 20px; margin: 0 7px 0 12px; background: #8c9cb0; }
.favlink { display: flex; align-items: center; gap: 4px; margin-left: 7px; color: #5a6470; }
.favlink .tri { width: 10px; height: 5px; margin: 0 3px 0 1px; }
.tabrow { flex: none; display: flex; align-items: flex-end; height: 28px; padding-left: 6px; border-bottom: 1px solid #8fa0b8; background: #dfeaf7; }
.ietab { display: flex; align-items: center; gap: 3px; width: 298px; height: 26px; padding-left: 4px; border: 1px solid #8fa0b8; border-bottom: 0; border-radius: 3px 3px 0 0; background: linear-gradient(#e9f1fb, #c9dcf6 40%, #f4f8fd); }
.newtab { width: 29px; height: 25px; margin-left: 1px; border: 1px solid #8fa0b8; border-bottom: 0; border-radius: 3px 3px 0 0; background: #e8f0fa; }
.cmds { display: flex; align-items: center; margin-left: auto; height: 28px; padding: 3px 4px 4px 0; }
.m1 { margin: 0 13px 0 9px; }
.m0 { margin: 0 16px 0 2px; }
.gap { width: 12px; }
.cmd { display: flex; align-items: center; gap: 4px; margin-right: 14px; }
.more { align-self: flex-start; color: #2c4c94; line-height: 12px; }

/* web page shell */
.page { flex: 1; min-height: 0; display: flex; flex-direction: column; margin-top: 3px; border: 2px solid #70747a; border-width: 2px 0 0 2px; font-family: var(--web); background: #dadde5; }
.banner { flex: none; display: flex; align-items: center; height: 29px; border-bottom: 1px solid #b4b8c0; background: linear-gradient(#f1f1f1, #dedede); }
.banner h1 { margin: 0 0 0 35px; font: 700 17px/20px Lato, Inter, sans-serif; color: #000; }
.banner nav { margin-left: auto; display: flex; padding-right: 19px; }
.banner nav button { display: flex; align-items: center; gap: 1px; padding: 0 18px; line-height: 16px; }
.banner nav button + button { border-left: 1px solid #c8c8c8; }
.tri.sm { width: 6px; height: 4px; }
.cols { flex: 1; min-height: 0; display: flex; padding: 5px 6px 8px 5px; gap: 8px; }
.side { flex: none; width: 156px; display: flex; flex-direction: column; background: #eef1f6; border-right: 1px solid #c8ccd8; }
.acc { flex: none; display: flex; align-items: center; justify-content: flex-end; gap: 54px; height: 22px; padding-right: 3px; font: 14px/20px var(--web); color: #fff; background: linear-gradient(#5a5a5a, #242424); }
.acc button { width: 15px; height: 15px; border-radius: 3px; background: #f4f4f4; color: #666; font: 13px/14px var(--web); }
.push { margin-top: auto; }
.home { display: flex; align-items: center; gap: 11px; height: 34px; padding: 0 0 11px 3px; }
.grp { border-top: 1px solid #c6cddb; padding-bottom: 10px; }
.grp h2 { margin: 0; height: 21px; padding-left: 6px; font: 400 12px/20px var(--web); }
.item { display: flex; align-items: center; gap: 11px; height: 22px; padding-left: 29px; white-space: nowrap; }
.item.tall { height: 23px; }
.item.on { height: 20px; margin: 1px 0; color: #4a0408; background: linear-gradient(#e41820, #a80c10); }

/* dimmed work area */
.work { flex: 1; min-width: 0; display: flex; position: relative; color: #7c7c80; }
.main { flex: 1; min-width: 0; display: flex; flex-direction: column; margin-left: 1px; background: #dedfe2; }
.ptitle { flex: none; display: flex; align-items: center; gap: 8px; height: 20px; padding-left: 15px; border-bottom: 1px solid #cfcfd1; background: linear-gradient(#e8e8e8, #dededf); }
.dot { width: 11px; height: 11px; border-radius: 50%; background: #dcb064; }
.filter { flex: none; display: flex; gap: 10px; height: 38px; padding: 5px 0 0 4px; }
.filter label { width: 56px; line-height: 20px; }
.sel { display: flex; height: 22px; border: 1px solid #b4b7bb; background: #e3e4e5; }
.sel select { flex: 1; min-width: 0; padding-left: 3px; appearance: none; outline: 0; font-family: var(--tah); color: #5c5c60; }
.arr { flex: none; width: 17px; border-left: 1px solid #b4b7bb; background: linear-gradient(#dfe0e0, #d4d5d6); display: flex; align-items: center; justify-content: center; }
.arr::before { content: ""; width: 8px; height: 6px; background: #7a7c80; clip-path: polygon(0 0, 25% 0, 50% 40%, 75% 0, 100% 0, 100% 35%, 50% 100%, 0 35%); }
.ipt { height: 22px; min-width: 0; border: 1px solid #c2c5c9; padding: 0 3px; outline: 0; font-family: var(--tah); }
.ipt::placeholder { color: #acaeb1; opacity: 1; }
.w75 { width: 75px; } .w80 { width: 80px; } .w103 { width: 103px; } .w115 { width: 115px; } .w120 { width: 120px; } .w130 { width: 130px; } .w140 { width: 140px; }
.tabs { flex: none; display: flex; height: 19px; }
.tab { height: 18px; padding: 0 16px 0 13px; line-height: 18px; color: #989898; background: linear-gradient(#cfcfcf, #bfc0c1); clip-path: polygon(0 3px, 4px 0, calc(100% - 15px) 0, calc(100% - 8px) 4px, 100% 100%, 12px 100%, 6px 12px); margin-left: -8px; }
.tab.cur { position: relative; margin: 0; padding: 0 26px 0 13px; font-weight: 700; color: #707074; background: #e4e4e5; clip-path: polygon(0 100%, 0 4px, 4px 0, calc(100% - 20px) 0, calc(100% - 13px) 5px, calc(100% - 5px) 15px, 100% 100%); }
.mt .tab.cur { margin-left: 2px; }
.mt .tab:not(.cur) { margin-left: -6px; clip-path: polygon(0 3px, 4px 0, calc(100% - 4px) 0, 100% 4px, 100% 100%, 12px 100%, 6px 12px); }
.wl { flex: none; height: 182px; padding: 3px 0 0 9px; border-top: 1px solid #e9e9ea; border-bottom: 39px solid #d2d3d7; }
.wlrow { display: flex; gap: 5px; }
.wlrow label { width: 81px; line-height: 24px; }
.wlrow .sel { border-color: #c2c5c9; background: #dedfe1; }
.wlrow .sel select { color: #acaeb1; }
.wlrow .ipt { width: 100px; }
.wlrow .end { margin-left: 15px; }
.two { margin-top: 17px; }
.two label { line-height: 20px; }
.stack { width: 220px; display: flex; flex-direction: column; gap: 5px; }
.stack.b { width: 70px; gap: 18px; margin-left: 20px; }
.stack .list { height: 50px; border: 1px solid #b8bbc0; }
.btn { height: 22px; border: 1px solid #b9bcc0; border-radius: 3px; line-height: 18px; font-family: var(--web); background: linear-gradient(#fdfdfd, #f2f2f2 55%, #dedede 58%, #e9e9e9); color: #222; }
.stack .btn { border-color: #c6c8ca; color: #b2b4b6; background: linear-gradient(#e0e1e2, #dcddde 55%, #d2d3d4 58%, #d9dadb); }
.tools { flex: none; display: flex; align-items: center; gap: 8px; height: 26px; padding: 0 8px 0 12px; background: linear-gradient(#e5e5e6, #dddddf); }
.tools button { display: flex; align-items: center; gap: 1px; height: 22px; color: #b0b2b4; }
.tools .new { width: 80px; padding-left: 16px; border: 1px solid #bdbfc1; border-radius: 3px; color: #78787c; background: linear-gradient(#e2e2e3, #d6d6d8); margin-right: -5px; }
.ts { width: 1px; height: 12px; background: #c2c4c6; }
.tools .right { margin-left: auto; }
.grid { flex: 1; min-height: 0; position: relative; background: #dce0e3; }
table { width: 100%; table-layout: fixed; border-collapse: collapse; }
.c1 { width: 39px; } .c2 { width: 198px; } .c3 { width: 118px; } .c5 { width: 236px; } .c6 { width: 22px; }
th { height: 24px; padding: 0 0 0 10px; text-align: left; color: #f2f2f2; font: 700 12px/16px var(--web); background: #919191; border-right: 1px solid #dcdcdc; }
th:first-child { padding-left: 14px; }
th:nth-child(4) { border-right: 0; }
th:last-child { border: 0; }
th input { appearance: none; display: block; width: 13px; height: 13px; margin-top: 3px; border: 1px solid #c8c8c8; background: #d6d6d6; box-shadow: inset 1px 1px 1px #a0a0a0; }
td { height: 15px; padding: 0; border-bottom: 1px solid #c6cacd; border-right: 1px solid #c6cacd; }
td.void { border: 0; }
.scroll { position: absolute; right: 0; top: 24px; bottom: 0; width: 17px; display: flex; flex-direction: column; justify-content: space-between; align-items: center; padding: 7px 0; background: #dddfe0; }
.up, .down { width: 7px; height: 4px; background: #8c8e90; clip-path: polygon(50% 0, 100% 100%, 0 100%); }
.down { clip-path: polygon(0 0, 100% 0, 50% 100%); }
.split { flex: none; width: 7px; display: flex; background: #d2d3d7; padding: 190px 0 347px 3px; }
.split i { width: 4px; background: #dedfe2; display: flex; align-items: center; }
.split i::before { content: ""; width: 4px; height: 8px; background: #85878a; clip-path: polygon(0 0, 100% 50%, 0 100%); }
.tasks { flex: none; width: 145px; display: flex; flex-direction: column; background: #d2d3d7; }
.tasks .tab.cur { padding: 0 26px 0 14px; }
.tbody { flex: 1; display: flex; flex-direction: column; padding: 4px 0 0 5px; background: #dedfe2; border: 1px solid #cbccd0; border-top: 3px solid #e6e6e7; }
.tbody h3 { margin: 3px 0 0; font: 700 12px/22px var(--web); color: #808084; }
.tbody a { line-height: 22px; color: #6464c0; }
.tbody a + h3 { margin-top: 8px; }

/* dialog */
.mask { position: absolute; inset: 0 0 -4px; display: flex; align-items: center; justify-content: center; }
.dlg { width: 598px; padding: 0 5px; border: 1px solid #aeb1b8; border-radius: 4px 4px 0 0; background: #d8dae1; box-shadow: 0 0 5px 1px rgba(60,60,70,.45); color: #3c3c40; }
.dhead { display: flex; align-items: center; justify-content: space-between; height: 30px; margin: 0 -5px 8px; padding: 0 4px; border-bottom: 1px solid #b4b7bc; background: linear-gradient(#f0f0f0, #e2e2e3); border-radius: 4px 4px 0 0; }
.dhead .bare { margin-right: 1px; }
.dlg .tab { color: #6c6c70; background: linear-gradient(#d6d6d6, #b8b8b9); }
.dlg .tab.cur { margin-left: 1px; padding-right: 28px; color: #333; background: linear-gradient(#fff, #f3f5f9); }
.dbody { padding: 11px 22px 11px 9px; border-top: 1px solid #fbfcfd; background: #eef1f6; }
.row { display: flex; gap: 3px; height: 27px; }
.row label, .block label { flex: none; width: 112px; line-height: 20px; }
.block label { width: 115px; }
.block { display: flex; height: 102px; }
.dlg .sel { background: #fff; }
.dlg select, .dlg .ipt { color: #000; }
.dlg .arr { background: linear-gradient(#f7f7f7, #e2e3e4); }
.dlg .arr::before { background: #55585c; }
.dlg .ipt { background: linear-gradient(#f2f3f4, #fff 5px); border-color: #b4b7bb; }
.dlg .ipt::placeholder, .ph select { color: #7c7e82 !important; }
.hint { margin-left: 7px; line-height: 26px; }
.zone { line-height: 30px; }
.field { width: 320px; }
.trio { display: flex; gap: 3px; }
.trio .ph { margin-left: 2px; }
.field .list { height: 71px; margin-top: 5px; padding: 2px 4px; border: 1px solid #b4b7bb; font-family: var(--tah); }
.caret { width: 1px; margin: 3px -1px 3px 2px; background: #000; }
.dlg .focus select { padding-left: 1px; }
.btns { display: flex; flex-direction: column; gap: 10px; width: 100px; margin-left: 20px; }
.dfoot { display: flex; justify-content: flex-end; gap: 6px; padding: 8px 7px 8px 0; }
.dfoot .btn { width: 75px; }

/* status bar */
.status { flex: none; display: flex; align-items: center; height: 22px; border-top: 1px solid #8c8c8e; background: #f0eded; }
.done { flex: 1; padding-left: 2px; }
.cell { width: 24px; height: 20px; border-left: 1px solid #d2d0d0; }
.zonebox, .sbox, .zbox { display: flex; align-items: center; height: 20px; border-left: 1px solid #d2d0d0; }
.zonebox { width: 229px; gap: 4px; padding-left: 4px; }
.sbox { width: 47px; gap: 8px; padding-left: 9px; }
.zbox { width: 108px; gap: 3px; padding-left: 12px; }
.zbox .tri { margin-left: 14px; }

/* taskbar */
.task { flex: none; display: flex; align-items: center; height: 39px; border-top: 1px solid #18344e; background: linear-gradient(90deg, #5a8fbc, #4280b4 16%, #4280b4 40%, #4d86b6 60%, #366790 64%, #34638c); }
.start { margin-left: 8px; }
.grip { width: 9px; height: 30px; margin: 0 9px 0 11px; background: radial-gradient(circle, #16344e 1px, transparent 1px) 0 0 / 3px 4px; }
.pin { width: 61px; height: 38px; display: flex; align-items: center; justify-content: center; }
.app { width: 59px; height: 38px; margin-right: 3px; display: flex; align-items: center; justify-content: center; border: 1px solid #1f425f; border-radius: 3px; box-shadow: inset 0 0 0 1px rgba(255,255,255,.45); background: linear-gradient(135deg, #84abcb, #5288b6 60%, #6fa0c8); }
.first { width: 52px; margin-left: 4px; margin-right: 10px; background: linear-gradient(135deg, #a8c4da, #7fa9cb); box-shadow: inset 0 0 0 1px rgba(255,255,255,.5), 4px 0 0 #5e90b8, 5px 0 0 #1f425f; }
.lit { background: linear-gradient(#dbe8f2, #a8c8e0); }
.fill { flex: 1; }
.g2 { margin: 0 7px 0 0; }
.net { width: 115px; height: 38px; display: flex; flex-direction: column; gap: 1px; background: #24506f; font: 12px/16px var(--tah); border: 1px solid #24506f; border-top: 0; }
.net div { flex: 1; display: flex; align-items: center; padding-left: 2px; background: #b8dde4; }
.net span { flex: 1; padding-left: 26px; }
.dn { color: #7c3444; }
.upl { color: #146038; }
.sig, .power { display: flex; align-items: center; height: 38px; border-radius: 12px 0 0 0; border: 1px solid #6f93b2; border-width: 1px 0 0 1px; background: linear-gradient(135deg, #6288aa, #38668e 50%); }
.sig { width: 93px; gap: 5px; margin-left: 4px; padding-left: 13px; border-right: 1px solid #17344e; }
.g3 { margin: 0 8px 0 62px; }
.power { width: 103px; margin-left: 11px; padding-left: 13px; border-right: 1px solid #17344e; }
.bat { width: 46px; height: 20px; border: 2px solid #fff; outline: 1px solid #10242c; text-align: center; line-height: 16px; color: #e8f4e8; background: linear-gradient(#2c8a3c, #0c6a20 50%, #128a2c); }
.nub { width: 4px; height: 10px; margin-right: 9px; background: #fff; }
.tray { display: flex; align-items: center; gap: 8px; padding: 0 8px 0 7px; }
.tray svg:first-child { margin-right: 5px; }
.desk { width: 14px; height: 38px; border: 1px solid #17344e; box-shadow: inset 1px 1px 0 #8fb0ca; background: linear-gradient(135deg, #88a9c4, #3f6d94); }
</style>
